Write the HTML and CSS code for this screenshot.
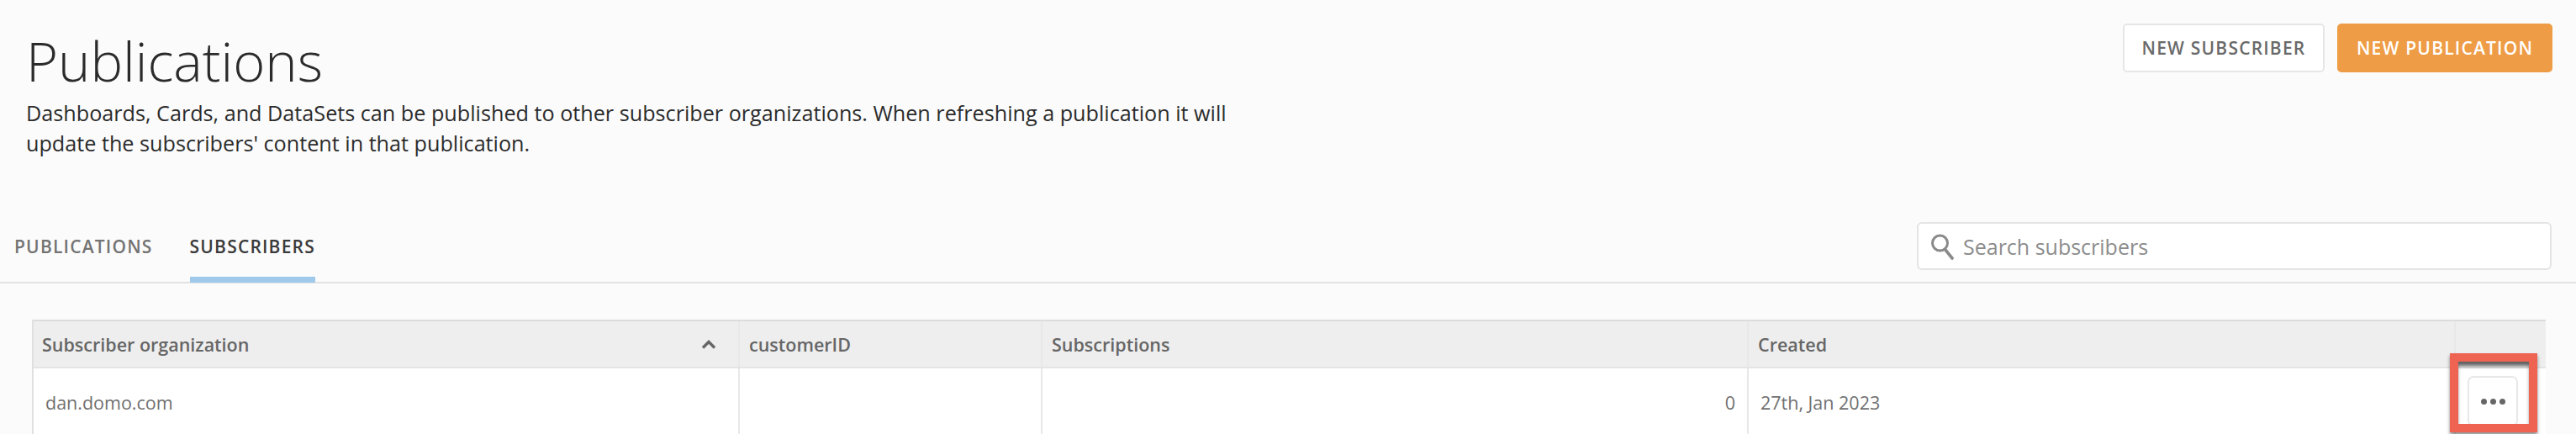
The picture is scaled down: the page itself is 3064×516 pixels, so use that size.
FILE: index.html
```html
<!DOCTYPE html>
<html lang="en">
<head>
<meta charset="utf-8">
<title>Publications</title>
<link rel="stylesheet" href="styles.css">
</head>
<body>
<div class="page">
  <header class="top">
    <div class="intro">
      <h1 class="title">Publications</h1>
      <p class="desc">Dashboards, Cards, and DataSets can be published to other subscriber organizations. When refreshing a publication it will update the subscribers' content in that publication.</p>
    </div>
    <div class="actions">
      <button class="btn btn-plain">NEW SUBSCRIBER</button>
      <button class="btn btn-primary">NEW PUBLICATION</button>
    </div>
  </header>
  <nav class="tabbar">
    <div class="tabs">
      <a class="tab">PUBLICATIONS</a>
      <a class="tab tab-active">SUBSCRIBERS</a>
    </div>
    <label class="search">
      <svg class="search-icon" viewBox="0 0 28 32" width="28" height="32"><circle cx="11.5" cy="12" r="9" fill="none" stroke="#8a8a8a" stroke-width="3"/><path d="M17.5 19.5L26 30" fill="none" stroke="#8a8a8a" stroke-width="3.6" stroke-linecap="round"/></svg>
      <span class="search-text">Search subscribers</span>
    </label>
  </nav>
  <section class="table">
    <div class="row head">
      <div class="cell cell-sort">Subscriber organization
        <svg class="caret" viewBox="0 0 18 11" width="18" height="11"><path d="M2 9.5L9 2.5L16 9.5" fill="none" stroke="#666" stroke-width="3.4"/></svg>
      </div>
      <div class="cell">customerID</div>
      <div class="cell">Subscriptions</div>
      <div class="cell">Created</div>
      <div class="cell"></div>
    </div>
    <div class="row body">
      <div class="cell cell-org">dan.domo.com</div>
      <div class="cell"></div>
      <div class="cell cell-num">0</div>
      <div class="cell">27th, Jan 2023</div>
      <div class="cell cell-act">
        <button class="more"><i></i><i></i><i></i></button>
        <div class="callout"></div>
      </div>
    </div>
  </section>
</div>
</body>
</html>
```
FILE: styles.css
```css
* { box-sizing: border-box; }
html, body { margin: 0; height: 516px; overflow: hidden; }
body { background: #fbfbfb; font-family: "Open Sans", "Liberation Sans", sans-serif; color: #2b2b2b; }
.page { width: 3064px; height: 516px; overflow: hidden; }

.top { display: flex; justify-content: space-between; align-items: flex-start; height: 264px; padding: 28px 28px 0 31px; }
.intro { width: 1450px; }
.title { margin: 0; font-size: 65px; font-weight: 300; line-height: 88px; color: #2b2b2b; }
.desc { margin: 0; font-size: 25.2px; line-height: 36px; color: #2b2b2b; }
.actions { display: flex; gap: 15px; }
.btn { height: 58px; border-radius: 5px; font-family: inherit; font-size: 21px; font-weight: 600; letter-spacing: 1.2px; padding: 0; }
.btn-plain { width: 240px; background: #fff; border: 2px solid #e6e6e6; color: #6a6a6a; }
.btn-primary { width: 256px; background: #ee9c46; border: 0; color: #fff; }

.tabbar { display: flex; justify-content: space-between; align-items: flex-start; height: 73px; border-bottom: 2px solid #e2e2e2; padding: 0 29px 0 17px; }
.tabs { display: flex; gap: 44px; height: 72px; }
.tab { display: block; height: 72px; padding-top: 14px; font-size: 21px; font-weight: 600; line-height: 30px; letter-spacing: 1.2px; color: #737373; }
.tab-active { color: #3a3a3a; border-bottom: 7px solid #9fc9ea; }
.search { display: flex; align-items: center; width: 755px; height: 57px; background: #fff; border: 2px solid #e4e4e4; border-radius: 6px; padding-left: 14px; }
.search-icon { flex: none; }
.search-text { margin-left: 11px; font-size: 25px; color: #8c8c8c; }

.table { margin: 43px 36px 0 38px; border-left: 2px solid #e0e0e0; }
.row { display: grid; grid-template-columns: 840px 360px 840px 841px 1fr; }
.head { height: 58px; background: #eee; border-top: 2px solid #dcdcdc; border-bottom: 2px solid #e4e4e4; }
.body { height: 90px; background: #fff; }
.cell { border-right: 2px solid #e8e8e8; padding: 0 14px; font-size: 21.5px; display: flex; align-items: center; }
.cell:last-child { border-right: 0; }
.head .cell { font-weight: 600; color: #666; padding-left: 11px; }
.head .cell-sort { padding-left: 10px; }
.body .cell { color: #707070; padding-bottom: 10px; }
.cell-sort { justify-content: space-between; }
.caret { margin-right: 12px; }
.body .cell-org { padding-left: 14px; }
.body .cell-num { justify-content: flex-end; }
.cell-act { position: relative; }
.more { position: absolute; left: 14px; top: 9px; width: 60px; height: 60px; background: #fff; border: 2px solid #e8e8e8; border-radius: 7px; display: flex; align-items: center; justify-content: center; gap: 4px; padding: 0; }
.more i { display: block; width: 7px; height: 7px; border-radius: 50%; background: #666; }
.callout { position: absolute; left: -7px; top: -18px; width: 104px; height: 94px; border: 10px solid #ee6352; box-shadow: 0 3px 4px rgba(0,0,0,.45), inset 0 6px 4px -1px rgba(0,0,0,.6); }
```
